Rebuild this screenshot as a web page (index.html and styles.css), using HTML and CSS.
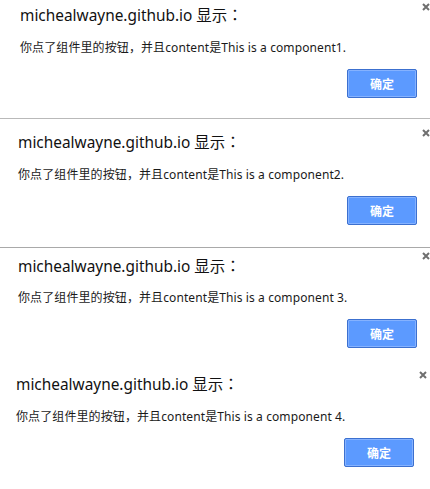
FILE: index.html
```html
<!DOCTYPE html>
<html lang="zh-CN">
<head>
<meta charset="utf-8">
<title>alerts</title>
<link rel="stylesheet" href="styles.css">
</head>
<body>
<div class="stack">
  <section class="dialog d1">
    <div class="head">
      <div class="title">michealwayne.github.io 显示<span class="colon" lang="ja">：</span></div>
      <span class="close"><svg viewBox="0 0 8 8" width="8" height="8"><path d="M1 1L7 7M7 1L1 7" stroke="#6f6f6f" stroke-width="2" fill="none"/></svg></span>
    </div>
    <p class="msg">你点了组件里的按钮，并且content是This is a component1.</p>
    <div class="actions"><button class="ok">确定</button></div>
  </section>
  <section class="dialog d2">
    <div class="head">
      <div class="title">michealwayne.github.io 显示<span class="colon" lang="ja">：</span></div>
      <span class="close"><svg viewBox="0 0 8 8" width="8" height="8"><path d="M1 1L7 7M7 1L1 7" stroke="#6f6f6f" stroke-width="2" fill="none"/></svg></span>
    </div>
    <p class="msg">你点了组件里的按钮，并且content是This is a component2.</p>
    <div class="actions"><button class="ok">确定</button></div>
  </section>
  <section class="dialog d3">
    <div class="head">
      <div class="title">michealwayne.github.io 显示<span class="colon" lang="ja">：</span></div>
      <span class="close"><svg viewBox="0 0 8 8" width="8" height="8"><path d="M1 1L7 7M7 1L1 7" stroke="#6f6f6f" stroke-width="2" fill="none"/></svg></span>
    </div>
    <p class="msg">你点了组件里的按钮，并且content是This is a component 3.</p>
    <div class="actions"><button class="ok">确定</button></div>
  </section>
  <section class="dialog d4">
    <div class="head">
      <div class="title">michealwayne.github.io 显示<span class="colon" lang="ja">：</span></div>
      <span class="close"><svg viewBox="0 0 8 8" width="8" height="8"><path d="M1 1L7 7M7 1L1 7" stroke="#6f6f6f" stroke-width="2" fill="none"/></svg></span>
    </div>
    <p class="msg">你点了组件里的按钮，并且content是This is a component 4.</p>
    <div class="actions"><button class="ok">确定</button></div>
  </section>
</div>
</body>
</html>
```

FILE: styles.css
```css
html, body {
  margin: 0;
  padding: 0;
  background: #ffffff;
}

body {
  font-family: "Noto Sans", "Noto Sans CJK SC", sans-serif;
  color: #1a1a1a;
  width: 430px;
  height: 489px;
  overflow: hidden;
}

.stack {
  display: flex;
  flex-direction: column;
}

.dialog {
  display: flex;
  flex-direction: column;
  background: #ffffff;
  padding: var(--pt) var(--pr) var(--pb) var(--pl);
}

.head {
  display: flex;
  justify-content: space-between;
  align-items: flex-start;
}

.title {
  font-size: 15.4px;
  line-height: 20px;
  height: 20px;
  margin-top: var(--tm);
  color: #111;
  white-space: nowrap;
}

.colon {
  font-family: "Noto Sans CJK JP", sans-serif;
  line-height: 0;
}

.close {
  display: block;
  width: 8px;
  height: 8px;
  margin-top: 3px;
}

.close svg {
  display: block;
}

.msg {
  margin: var(--mm) 0 0;
  font-size: 12px;
  line-height: 16px;
  height: 16px;
  white-space: nowrap;
  color: #1a1a1a;
  letter-spacing: 0.1px;
}

.actions {
  display: flex;
  justify-content: flex-end;
  margin-top: 13px;
  margin-right: 13px;
}

.ok {
  width: 70px;
  height: 29px;
  box-sizing: border-box;
  border: 1px solid #3c70cf;
  box-shadow: inset 0 0 0 1px #85b2ff;
  background: #5c9aff;
  border-radius: 2px;
  color: #ffffff;
  font-family: "Noto Sans CJK SC", sans-serif;
  font-size: 12px;
  font-weight: 700;
  padding: 0;
}

.d1 {
  --pt: 0px; --pr: 0px; --pb: 20px; --pl: 20px;
  --tm: 6px; --mm: 14px;
  border-bottom: 1px solid #b9b9b9;
}

.d2 {
  --pt: 7px; --pr: 0px; --pb: 22px; --pl: 18px;
  --tm: 7px; --mm: 14px;
  border-bottom: 1px solid #a9a9a9;
}

.d3 {
  --pt: 1px; --pr: 0px; --pb: 20px; --pl: 18px;
  --tm: 8px; --mm: 13px;
}

.d4 {
  --pt: 0px; --pr: 3px; --pb: 20px; --pl: 16px;
  --tm: 7px; --mm: 14px;
}
```
